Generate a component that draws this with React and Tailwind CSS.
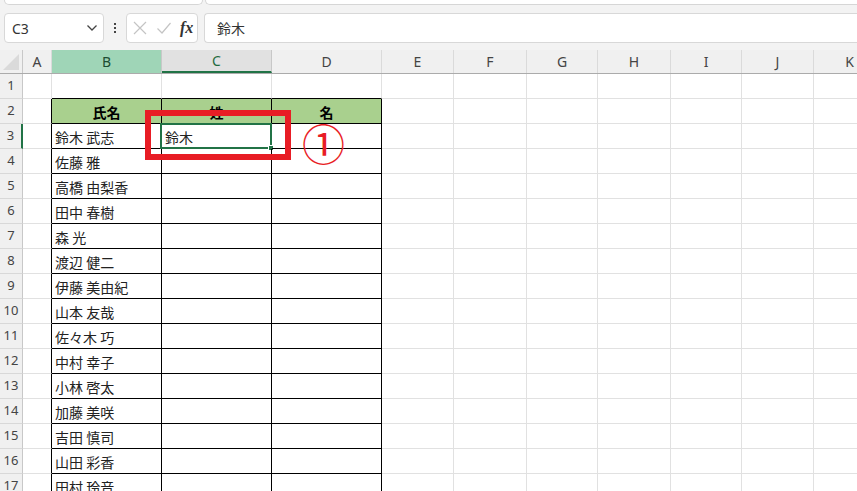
import React from 'react';

const names = [
  '鈴木 武志', '佐藤 雅', '高橋 由梨香', '田中 春樹', '森 光', '渡辺 健二', '伊藤 美由紀',
  '山本 友哉', '佐々木 巧', '中村 幸子', '小林 啓太', '加藤 美咲', '吉田 慎司', '山田 彩香', '田村 玲音',
];

const cols = ['A', 'B', 'C', 'D', 'E', 'F', 'G', 'H', 'I', 'J', 'K'];
const widths = ['w-[29px]', 'w-[110px]', 'w-[110px]', 'w-[110px]', 'w-[72px]', 'w-[73px]', 'w-[71px]', 'w-[73px]', 'w-[71px]', 'w-[72px]', 'w-[72px]'];

const jp = { fontFamily: '"Noto Sans CJK JP", "Noto Sans", sans-serif' };
const ui = { fontFamily: '"Noto Sans", "Liberation Sans", sans-serif' };

function Toolbar() {
  return (
    <div className="h-[50px] bg-[#f3f3f3] relative shrink-0">
      <div className="flex h-[5px]">
        <div className="ml-[4px] w-[199px] bg-white rounded-b-[5px] border-b border-x border-[#d6d6d6]" />
        <div className="ml-[2px] flex-1 bg-white rounded-bl-[5px] border-b border-l border-[#d6d6d6]" />
      </div>
      <div className="flex items-center mt-[8px] h-[30px]">
        <div className="ml-[4px] w-[100px] h-full bg-white border border-[#d8d8d8] rounded-[4px] flex items-center justify-between pl-[7px] pr-[5px]">
          <span className="text-[14px] text-[#333]" style={ui}>C3</span>
          <svg width="12" height="8" viewBox="0 0 12 8"><path d="M1.5 1.5 6 6l4.5-4.5" fill="none" stroke="#444" strokeWidth="1.3" /></svg>
        </div>
        <div className="w-[22px] flex flex-col items-center gap-[2px]">
          <span className="w-[2px] h-[2px] bg-[#444]" />
          <span className="w-[2px] h-[2px] bg-[#444]" />
          <span className="w-[2px] h-[2px] bg-[#444]" />
        </div>
        <div className="w-[72px] h-full bg-white border border-[#d8d8d8] rounded-[4px] flex items-center pl-[5px] gap-[8px]">
          <svg width="16" height="16" viewBox="0 0 16 16"><path d="M2 2l12 12M14 2 2 14" stroke="#c4c4c4" strokeWidth="1.2" /></svg>
          <svg width="16" height="16" viewBox="0 0 16 16"><path d="M1.5 8.5 6 13l8.5-10" fill="none" stroke="#c4c4c4" strokeWidth="1.2" /></svg>
          <span className="text-[16px] italic font-bold text-[#333] leading-none" style={{ fontFamily: '"Liberation Serif", serif' }}>fx</span>
        </div>
        <div className="ml-[6px] flex-1 h-full bg-white border-y border-l border-[#d8d8d8] rounded-l-[4px] flex items-center pl-[12px]">
          <span className="text-[14px] text-[#333]" style={jp}>鈴木</span>
        </div>
      </div>
    </div>
  );
}

function HeaderRow() {
  return (
    <div className="flex h-[24px] bg-[#f0f0f0] border-b border-[#ababab]">
      <div className="w-[23px] shrink-0 h-full border-r border-[#c8c8c8] relative">
        <svg className="absolute right-[3px] bottom-[3px]" width="16" height="16" viewBox="0 0 16 16"><path d="M16 0V16H0Z" fill="#dadada" /></svg>
      </div>
      {cols.map((c, i) => {
        const cls = c === 'B'
          ? 'bg-[#9fd5b7] text-[#1d4d33] border-r border-[#c8c8c8]'
          : c === 'C'
            ? 'bg-[#e1e1e1] text-[#1f6b40] border-r border-[#c8c8c8] border-b-2 border-b-[#217346]'
            : 'text-[#444] border-r border-[#dadada]';
        return (
          <div key={c} className={`${widths[i]} shrink-0 h-full flex items-center justify-center text-[14px] ${cls}`} style={ui}>
            {c}
          </div>
        );
      })}
    </div>
  );
}

function Row({ r }) {
  const inTableRow = r >= 2;
  return (
    <div className="flex h-[25px]">
      <div className={`w-[23px] shrink-0 h-full flex items-center justify-center text-[13px] text-[#444] bg-[#f0f0f0] border-b border-[#d8d8d8] ${r === 3 ? 'border-r-2 border-r-[#217346] bg-[#e1e1e1]' : 'border-r border-r-[#c8c8c8]'}`} style={ui}>
        {r}
      </div>
      {cols.map((c, i) => {
        const isTable = inTableRow && (c === 'B' || c === 'C' || c === 'D');
        let cls = 'border-r border-b border-[#e1e1e1]';
        if (isTable) cls = 'border-r border-b border-black';
        else if (c === 'A' && inTableRow) cls = 'border-b border-b-[#e1e1e1] border-r border-r-black';
        else if (r === 1 && (c === 'B' || c === 'C' || c === 'D')) cls = 'border-r border-r-[#e1e1e1] border-b border-b-black';
        const header = r === 2 && isTable;
        let text = '';
        if (header) text = { B: '氏名', C: '姓', D: '名' }[c];
        else if (c === 'B' && r >= 3) text = names[r - 3];
        else if (c === 'C' && r === 3) text = '鈴木';
        return (
          <div
            key={c}
            className={`${widths[i]} shrink-0 h-full relative flex items-center text-[14px] ${cls} ${header ? 'bg-[#a9d08e] justify-center font-bold text-black' : 'pl-[3px] text-[#222]'}`}
            style={jp}
          >
            {text && <span className="leading-none pt-[2px]">{text}</span>}
            {c === 'C' && r === 3 && (
              <>
                <div className="absolute -left-[2px] -top-[1px] -right-[1px] -bottom-[1px] border-2 border-[#217346]" />
                <div className="absolute -right-[3px] -bottom-[3px] w-[6px] h-[6px] bg-[#217346] border border-white" />
              </>
            )}
          </div>
        );
      })}
    </div>
  );
}

export default function App() {
  const rows = Array.from({ length: 17 }, (_, i) => i + 1);
  return (
    <div className="w-[857px] h-[491px] overflow-hidden bg-white relative flex flex-col">
      <Toolbar />
      <div className="flex-1 overflow-hidden">
        <HeaderRow />
        {rows.map((r) => <Row key={r} r={r} />)}
      </div>
      <div className="absolute left-[145px] top-[110px] w-[146px] h-[50px] border-[6px] border-[#e81d25]" />
      <div className="absolute left-[302px] top-[121px] text-[43px] leading-none font-normal text-[#e81d25]" style={jp}>①</div>
    </div>
  );
}
